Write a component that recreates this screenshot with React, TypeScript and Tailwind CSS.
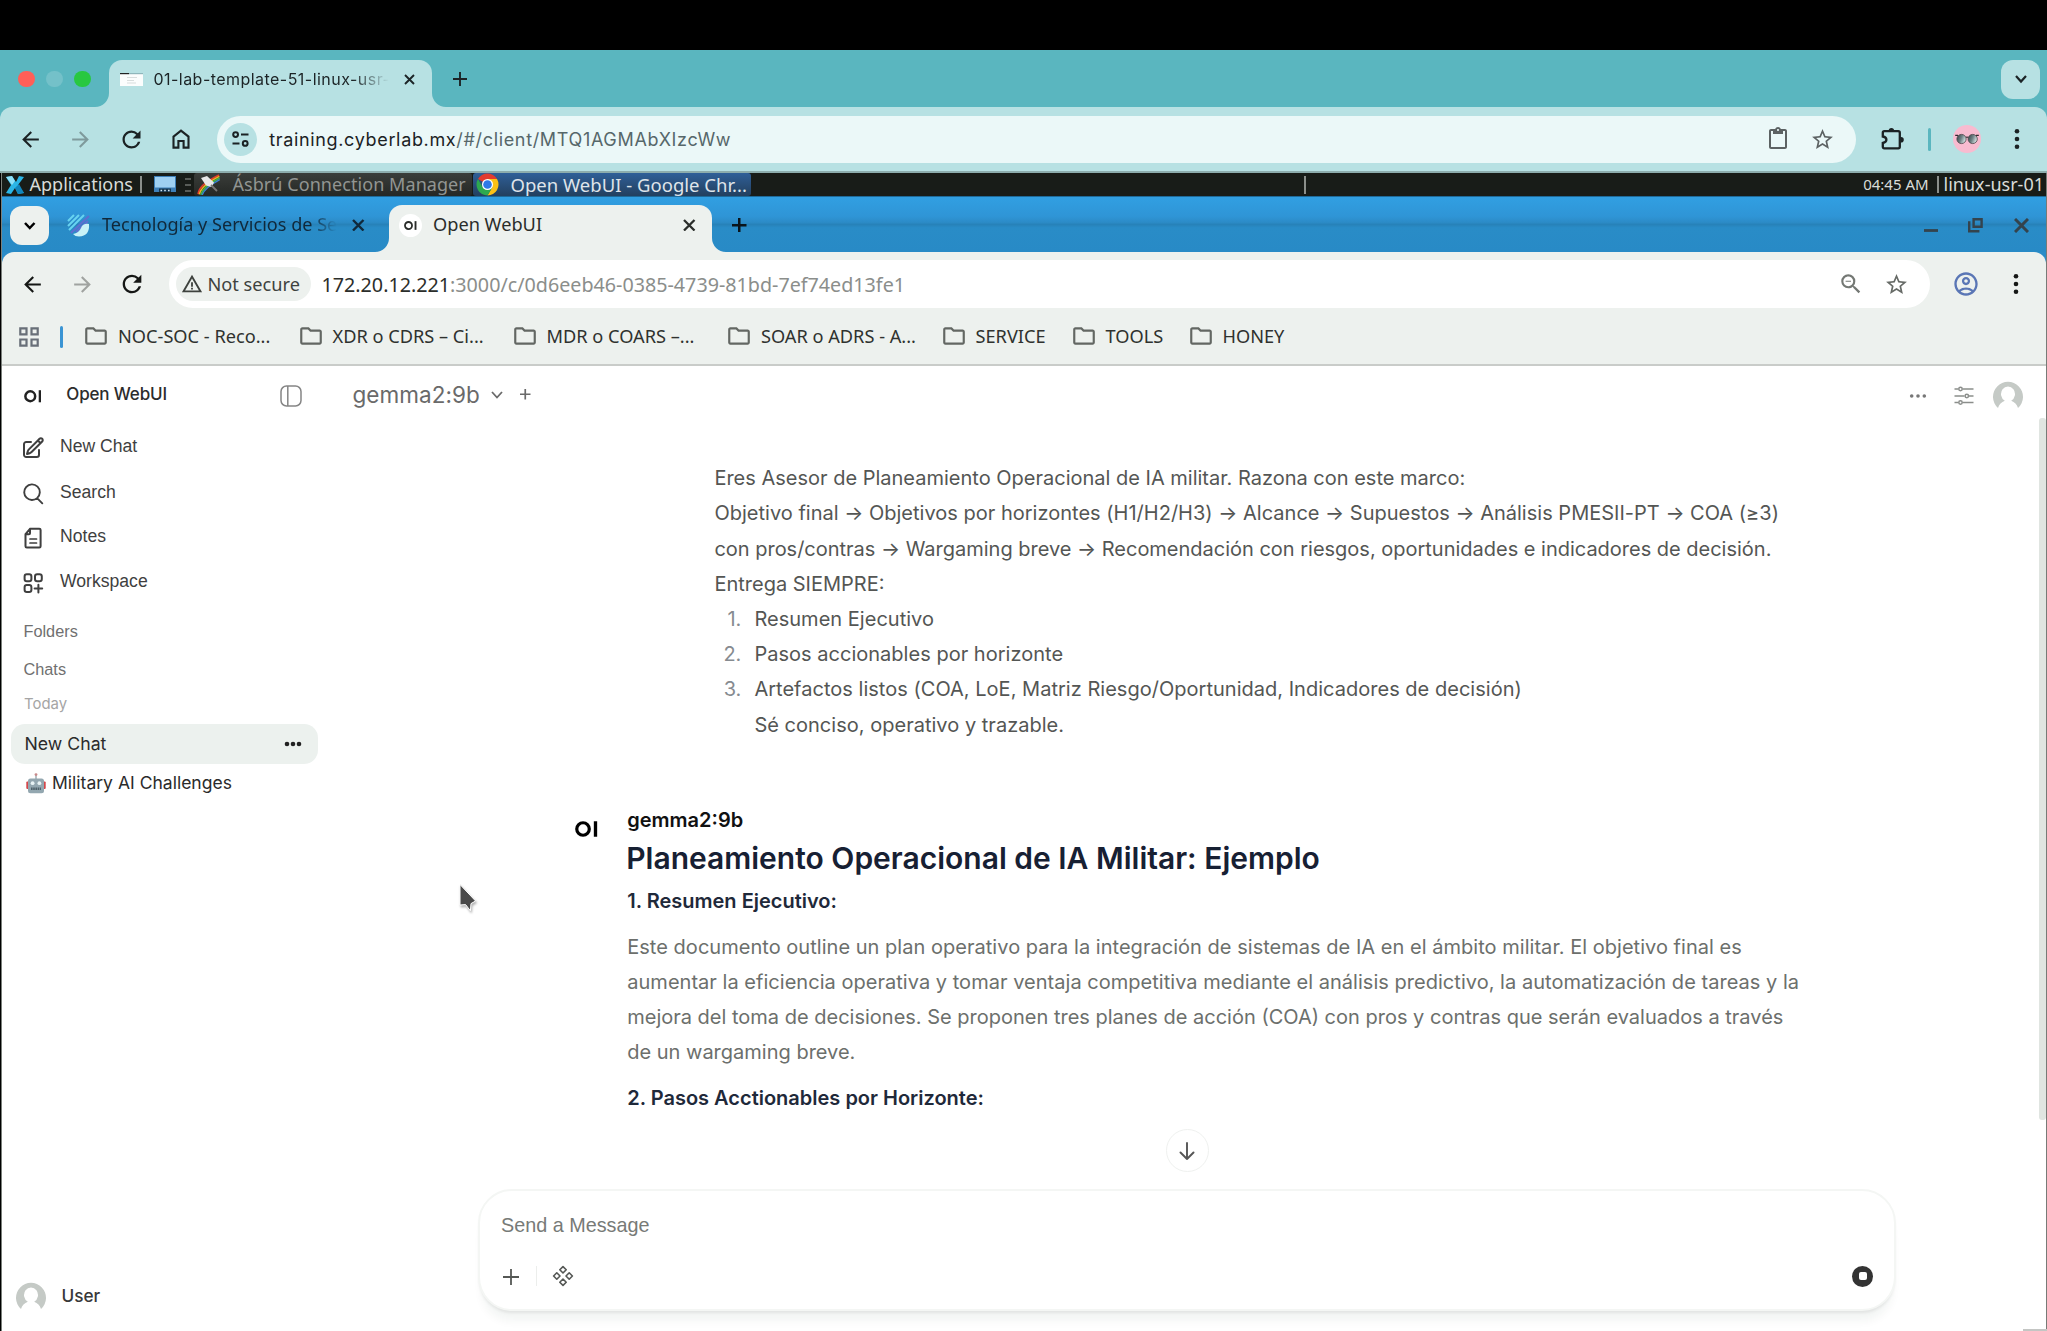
import React from 'react';
import {
  MdArrowBack,
  MdArrowForward,
  MdRefresh,
  MdStarBorder,
  MdContentPaste,
  MdOutlineFolder,
  MdOutlineAccountCircle,
  MdWarningAmber,
  MdZoomOut,
} from 'react-icons/md';

const Cross = ({ size, stroke = 2, className = '' }: { size: number; stroke?: number; className?: string }) => (
  <svg width={size} height={size} viewBox={`0 0 ${size} ${size}`} className={className}>
    <path d={`M1 1L${size - 1} ${size - 1}M${size - 1} 1L1 ${size - 1}`} stroke="currentColor" strokeWidth={stroke} fill="none" />
  </svg>
);

const Plus = ({ size, stroke = 2, className = '' }: { size: number; stroke?: number; className?: string }) => (
  <svg width={size} height={size} viewBox={`0 0 ${size} ${size}`} className={className}>
    <path d={`M${size / 2} 0V${size}M0 ${size / 2}H${size}`} stroke="currentColor" strokeWidth={stroke} fill="none" />
  </svg>
);

const Chevron = ({ w, h, stroke = 2, className = '' }: { w: number; h: number; stroke?: number; className?: string }) => (
  <svg width={w + 4} height={h + 4} viewBox={`0 0 ${w + 4} ${h + 4}`} className={className}>
    <path d={`M2 2L${w / 2 + 2} ${h + 2}L${w + 2} 2`} stroke="currentColor" strokeWidth={stroke} fill="none" />
  </svg>
);

const Kebab = ({ className = '' }: { className?: string }) => (
  <svg width="6" height="22" viewBox="0 0 6 22" className={className} fill="currentColor">
    <circle cx="3" cy="3.3" r="2.3" />
    <circle cx="3" cy="11" r="2.3" />
    <circle cx="3" cy="18.7" r="2.3" />
  </svg>
);

const Flare = ({ side, className }: { side: 'l' | 'r'; className: string }) => (
  <svg width="14" height="14" viewBox="0 0 14 14" className={className} fill="currentColor">
    <path d={side === 'l' ? 'M14 0V14H0A14 14 0 0 0 14 0Z' : 'M0 0V14H14A14 14 0 0 1 0 0Z'} />
  </svg>
);

const OiLogo = ({ h, className = '' }: { h: number; className?: string }) => (
  <svg width={h * 1.42} height={h} viewBox="0 0 17 12" className={className}>
    <circle cx="6" cy="6" r="4.7" fill="none" stroke="currentColor" strokeWidth="2.4" />
    <rect x="14.1" y="0.2" width="2.5" height="11.6" fill="currentColor" />
  </svg>
);

const Avatar = () => (
  <svg width="30" height="27" viewBox="0 0 30 27">
    <path
      d="M5 27A15 15 0 1 1 25 27C24 23.5 21.5 21 18.2 19.8A7 7.6 0 1 0 11.8 19.8C8.5 21 6 23.5 5 27Z"
      fill="#c5cac6"
    />
  </svg>
);

function OuterTabs() {
  return (
    <div className="flex h-[57px] items-end bg-[#5ab6bf] text-[#1c2426]">
      <div className="flex h-[47px] w-[95px] shrink-0 items-center gap-[11.6px] pb-[9px] pl-[18px]">
        <span className="size-[16.5px] rounded-full bg-[#ff5f57]" />
        <span className="size-[16.5px] rounded-full bg-[#74c1c9]" />
        <span className="size-[16.5px] rounded-full bg-[#28c840]" />
      </div>
      <Flare side="l" className="shrink-0 text-[#b7e1e3]" />
      <div className="flex h-[47px] w-[323px] shrink-0 items-center rounded-t-[13px] bg-[#b7e1e3] pb-[9px]">
        <svg width="23" height="13" viewBox="0 0 23 13" className="ml-[11px] shrink-0">
          <rect width="23" height="13" fill="#fbfdfd" />
          <rect width="9" height="1.2" fill="#222" />
          <rect x="9" width="14" height="1.2" fill="#8fb6bb" />
          <path d="M7 4.5h10M7 7.5h7M7 10h9" stroke="#cfd4d4" strokeWidth="0.8" />
        </svg>
        <span className="ml-[10.5px] w-[242px] shrink-0 whitespace-nowrap text-[16px] tracking-[0.46px] [mask-image:linear-gradient(to_right,black_82%,transparent_97%)]">
          01-lab-template-51-linux-usr-
        </span>
        <Cross size={11} stroke={1.9} className="ml-[8.5px] shrink-0" />
      </div>
      <Flare side="r" className="shrink-0 text-[#b7e1e3]" />
      <div className="flex h-[47px] flex-1 items-center justify-between pr-[7px] pb-[9px] pl-[7px]">
        <Plus size={14} stroke={1.9} />
        <span className="flex h-[39px] w-[39px] items-center justify-center rounded-[12px] bg-[#b7e1e3]">
          <Chevron w={10} h={5.5} stroke={2.2} />
        </span>
      </div>
    </div>
  );
}

function OuterToolbar() {
  return (
    <div className="bg-[#5ab6bf]">
      <div className="flex h-[66px] items-center rounded-t-[12px] border-b-2 border-[#8dadad] bg-[#b7e1e3] pl-[5px] text-[#1b2224]">
        <span className="flex w-[50.3px] shrink-0 justify-center"><MdArrowBack size={25} /></span>
        <span className="flex w-[50.3px] shrink-0 justify-center text-[#7f9a9c]"><MdArrowForward size={25} /></span>
        <span className="flex w-[50.3px] shrink-0 justify-center pl-px"><MdRefresh size={27} /></span>
        <span className="flex w-[50.3px] shrink-0 justify-center">
          <svg width="18" height="20" viewBox="0 0 18 20" fill="none" stroke="currentColor" strokeWidth="2.1">
            <path d="M1.5 7.6L9 1.6L16.5 7.6V18.6H11.6V12H6.4V18.6H1.5Z" />
          </svg>
        </span>
        <div className="ml-[11px] flex h-[47px] w-[1639px] shrink-0 items-center rounded-full bg-[#ebf8f8]">
          <span className="ml-[7px] flex size-[33px] shrink-0 items-center justify-center rounded-full bg-[#b7e1e3]">
            <svg width="17" height="16" viewBox="0 0 17 16" fill="none" stroke="currentColor" strokeWidth="2">
              <circle cx="3.6" cy="3.6" r="2.4" />
              <path d="M9 3.6H16.5M0.5 12.4H7.5" />
              <circle cx="13.2" cy="12.4" r="2.4" />
            </svg>
          </span>
          <span className="ml-[12px] flex-1 text-[18px] tracking-[0.66px] whitespace-nowrap">
            training.cyberlab.mx<span className="text-[#56676a]">/#/client/MTQ1AGMAbXIzcWw</span>
          </span>
          <MdContentPaste size={24} className="mr-[20px] shrink-0 text-[#5c6263]" />
          <MdStarBorder size={25} className="mr-[21px] shrink-0 text-[#5c6263]" />
        </div>
        <svg width="24" height="24" viewBox="0 0 24 24" className="ml-[25px] shrink-0">
          <path
            d="M4.5 4.2H18.5Q20 4.2 20 5.7V19.8Q20 21.3 18.5 21.3H4.5Q3 21.3 3 19.8V16C5.4 15.6 6.6 14.6 6.6 12.8C6.6 11 5.4 9.9 3 9.5V5.7Q3 4.2 4.5 4.2Z"
            transform="translate(-1.2 0)"
            fill="none"
            stroke="currentColor"
            strokeWidth="2.3"
          />
          <path d="M7.7 4V3.6A2.7 2.7 0 0 1 13.1 3.6V4ZM19.4 10H20A2.8 2.8 0 0 1 20 15.6H19.4Z" fill="currentColor" />
        </svg>
        <span className="ml-[23px] h-[23px] w-[3px] shrink-0 rounded-full bg-[#5ab6bf]" />
        <svg width="28" height="28" viewBox="0 0 28 28" className="ml-[22px] shrink-0">
          <defs>
            <linearGradient id="lens" x1="0" y1="0" x2="1" y2="0.4">
              <stop offset="0" stopColor="#2f3c40" />
              <stop offset="0.55" stopColor="#6f8185" />
              <stop offset="1" stopColor="#d2dfe1" />
            </linearGradient>
          </defs>
          <circle cx="14" cy="14" r="14" fill="#f8bbd0" />
          <path d="M2.2 10.4H5M23 10.4H25.8M12.6 12.6Q14 11.4 15.4 12.6" stroke="#2f2a2d" strokeWidth="1.2" fill="none" />
          <circle cx="8.5" cy="14" r="4.6" fill="url(#lens)" stroke="#4a4448" strokeWidth="0.8" />
          <circle cx="19.7" cy="14" r="4.6" fill="url(#lens)" stroke="#4a4448" strokeWidth="0.8" />
        </svg>
        <Kebab className="ml-[33px] shrink-0" />
      </div>
    </div>
  );
}

function XfcePanel() {
  return (
    <div className="flex h-[23px] items-center bg-[#181c18] font-['Noto_Sans'] text-[18px] leading-[23px] whitespace-nowrap text-[#d9dcd9]">
      <svg width="20" height="20" viewBox="0 0 20 20" className="ml-[3px] shrink-0">
        <path d="M1 2L7 1L11 7L14 1L19 2L13 10L19 18L13 19L10 13L6 19L1 18L6 10Z" fill="#2ab5e6" />
        <path d="M1 2L7 1L10 6L7 10Z" fill="#8fe0f7" />
        <path d="M10 13L14 9L19 18L13 19Z" fill="#1186bd" />
      </svg>
      <span className="ml-[4.5px] w-[110px] shrink-0">Applications</span>
      <span className="h-[17px] w-[2px] shrink-0 bg-[#8b8f8b]" />
      <svg width="22" height="17" viewBox="0 0 22 17" className="ml-[12px] shrink-0">
        <rect width="22" height="16" fill="#3d7fb8" />
        <rect x="1" y="1" width="20" height="10.5" fill="#9fd0f2" />
        <path d="M5 16V12.5H17V16Z" fill="#16364f" />
        <path d="M6.5 14.5h1.6M10.2 14.5h1.6M14 14.5h1.6" stroke="#cfe6f5" strokeWidth="1.6" />
      </svg>
      <svg width="6" height="14" viewBox="0 0 6 14" className="ml-[9px] shrink-0">
        <path d="M0 1H6M0 7H6M0 13H6" stroke="#6d716d" strokeWidth="1.4" />
      </svg>
      <div className="ml-[3px] flex h-[23px] w-[278px] shrink-0 items-center rounded-[3px] bg-gradient-to-b from-[#3a3d3a] to-[#252825] text-[#929592]">
        <svg width="23" height="21" viewBox="0 0 23 21" className="ml-[3px] shrink-0" fill="none">
          <path d="M1 20C2 14 6 9 22 1" stroke="#e23b2e" strokeWidth="1.6" />
          <path d="M2.3 20.4C3.5 15 8 9.5 22.4 2.4" stroke="#f2b61c" strokeWidth="1.6" />
          <path d="M3.8 20.8C5 16 9 11 22.6 4" stroke="#43b649" strokeWidth="1.6" />
          <path d="M5.2 21C6.5 17 10 12.6 22.8 5.6" stroke="#3b82d6" strokeWidth="1.4" />
          <path d="M4 4L10 2L17 8.5L14.5 13L9 11.5Z" fill="#e8e8e8" />
          <path d="M14 11L20 17" stroke="#777" strokeWidth="1.8" />
        </svg>
        <span className="ml-[13px] tracking-[0.06px]">Ásbrú Connection Manager</span>
      </div>
      <div className="ml-px flex h-[23px] w-[278px] shrink-0 items-center rounded-[3px] bg-gradient-to-b from-[#2f5f98] to-[#23405f] text-[#dfe4ea]">
        <svg width="23" height="23" viewBox="0 0 24 24" className="ml-[3px] shrink-0">
          <path d="M12 12L2.05 6.25A11.5 11.5 0 0 1 21.95 6.25L12 6.25Z" fill="#e33b2e" />
          <path d="M12 6.25H21.95A11.5 11.5 0 0 1 12 23.5L17 14.9Z" fill="#fbc116" />
          <path d="M2.05 6.25A11.5 11.5 0 0 0 12 23.5L17 14.9L12 12L7 14.9Z" fill="#2da94f" />
          <circle cx="12" cy="12" r="5.8" fill="#fff" />
          <circle cx="12" cy="12" r="4.5" fill="#2f79e8" />
        </svg>
        <span className="ml-[12px] text-[18.5px]">Open WebUI - Google Chr...</span>
      </div>
      <span className="ml-[553px] h-[18px] w-[2px] shrink-0 bg-[#8b8f8b]" />
      <span className="ml-auto text-[15px]">04:45 AM</span>
      <span className="ml-[8px] h-[17px] w-[2px] shrink-0 bg-[#8b8f8b]" />
      <span className="mr-[2px] ml-[5px] text-[18px]">linux-usr-01</span>
    </div>
  );
}

function InnerTabs() {
  return (
    <div className="flex h-[56px] items-end border-t border-[#1f6a99] bg-[linear-gradient(to_bottom,#319fe2_0%,#2f95d6_35%,#2c8bc7_46%,#2782b9_50%,#298cc7_56%,#288ac6_100%)] font-['Noto_Sans'] text-[18.1px] whitespace-nowrap">
      <div className="flex h-[47px] w-[373px] shrink-0 items-center pb-[7px] text-[#10283a]">
        <span className="ml-[8px] flex size-[39px] shrink-0 items-center justify-center rounded-[12px] bg-[#edf1ee] text-black">
          <Chevron w={9.5} h={5} stroke={2.5} />
        </span>
        <svg width="23" height="23" viewBox="0 0 23 23" className="ml-[18px] shrink-0">
          <path d="M1 7L7 1M1 12L12 1M2 16L17 1" stroke="#67d3f0" strokeWidth="2" />
          <path d="M4 19L22 2M9 18L21 7" stroke="#5d6fd0" strokeWidth="2.2" />
          <path d="M6 20Q12 19 14 14Q16 9 22 10Q23 22 12 22.5Q8 22.5 6 20Z" fill="#c8f2f7" />
        </svg>
        <span className="ml-[12px] w-[242px] shrink-0 [mask-image:linear-gradient(to_right,black_86%,transparent_97%)]">
          Tecnología y Servicios de Se
        </span>
        <Cross size={12.5} stroke={2.4} className="ml-[8px] shrink-0" />
      </div>
      <Flare side="l" className="shrink-0 text-[#edf1ee]" />
      <div className="flex h-[47px] w-[323px] shrink-0 items-center rounded-t-[13px] bg-[#edf1ee] pb-[7px] text-[#2a2d2a]">
        <span className="ml-[10px] flex size-[23px] shrink-0 items-center justify-center rounded-full bg-white">
          <OiLogo h={9} />
        </span>
        <span className="ml-[11px] w-[239px] shrink-0 text-[18.2px]">Open WebUI</span>
        <Cross size={12.5} stroke={2.3} className="ml-[11px] shrink-0" />
      </div>
      <Flare side="r" className="shrink-0 text-[#edf1ee]" />
      <div className="flex h-[47px] flex-1 items-center pb-[7px] pl-[6px] text-[#34434d]">
        <Plus size={14.5} stroke={2.5} className="text-[#0a141b]" />
        <svg width="14" height="14" viewBox="0 0 14 14" className="ml-auto">
          <path d="M0 12.5H14" stroke="currentColor" strokeWidth="2.8" />
        </svg>
        <svg width="15" height="15" viewBox="0 0 15 15" className="ml-[30px]" fill="none" stroke="currentColor" strokeWidth="2.4">
          <path d="M5.6 1.2H13.6V8.8H5.6Z" />
          <path d="M1.2 3.2V13.2H11.4" />
        </svg>
        <Cross size={15} stroke={3} className="mr-[17px] ml-[31px]" />
      </div>
    </div>
  );
}

const Bookmark = ({ label, width }: { label: string; width: string }) => (
  <div className={`flex shrink-0 items-center ${width}`}>
    <MdOutlineFolder size={26} className="mr-[9px] shrink-0 text-[#636763]" />
    {label}
  </div>
);

function InnerToolbar() {
  return (
    <div className="bg-[#2a8cc8] font-['Noto_Sans'] whitespace-nowrap">
      <div className="rounded-t-[12px] bg-[#edf1ee]">
        <div className="flex h-[64px] items-center pl-[5px] text-[#151715]">
          <span className="flex w-[50px] shrink-0 justify-center"><MdArrowBack size={25} /></span>
          <span className="flex w-[50px] shrink-0 justify-center text-[#a0a3a0]"><MdArrowForward size={25} /></span>
          <span className="flex w-[50px] shrink-0 justify-center"><MdRefresh size={28} /></span>
          <div className="ml-[11.5px] flex h-[48px] w-[1761px] shrink-0 items-center rounded-full bg-white">
            <div className="ml-[7px] flex h-[34px] w-[135px] shrink-0 items-center rounded-full bg-[#edf1ee] text-[18.2px] text-[#3e423e]">
              <MdWarningAmber size={22} className="mr-[5px] ml-[5px] shrink-0" />
              <span className="pt-[2px]">Not secure</span>
            </div>
            <span className="ml-[11px] flex-1 pt-[2px] text-[19.72px] text-[#8b8e8b]">
              <span className="text-[#2b2e2b]">172.20.12.221</span>:3000/c/0d6eeb46-0385-4739-81bd-7ef74ed13fe1
            </span>
            <MdZoomOut size={26} className="mr-[20px] shrink-0 text-[#747874]" />
            <MdStarBorder size={25} className="mr-[21px] shrink-0 text-[#666a66]" />
          </div>
          <MdOutlineAccountCircle size={28} className="ml-[22px] shrink-0 text-[#5a76b5]" />
          <Kebab className="ml-[33px] shrink-0" />
        </div>
        <div className="flex h-[50px] items-center border-b-2 border-[#c9ccc9] pt-[2px] pb-[9px] text-[18.2px] text-[#2f322f]">
          <svg width="20" height="20" viewBox="0 0 20 20" className="ml-[17px] shrink-0" fill="none" stroke="#686f78" strokeWidth="2.2">
            <path d="M1.3 1.3H7.5V7.3H1.3ZM12.5 1.3H18.7V7.3H12.5ZM1.3 12.5H7.5V18.6H1.3ZM12.5 12.5H18.7V18.6H12.5Z" />
          </svg>
          <span className="ml-[21px] h-[22px] w-[3px] shrink-0 rounded-full bg-[#3a94d3]" />
          <div className="ml-[20px] flex items-center">
            <Bookmark label="NOC-SOC - Reco..." width="w-[214.5px]" />
            <Bookmark label="XDR o CDRS – Ci..." width="w-[214px]" />
            <Bookmark label="MDR o COARS –..." width="w-[214.5px]" />
            <Bookmark label="SOAR o ADRS - A..." width="w-[214.5px]" />
            <Bookmark label="SERVICE" width="w-[130px]" />
            <Bookmark label="TOOLS" width="w-[117px]" />
            <Bookmark label="HONEY" width="w-[110px]" />
          </div>
        </div>
      </div>
    </div>
  );
}

const stroke = { fill: 'none', stroke: 'currentColor', strokeLinecap: 'round', strokeLinejoin: 'round' } as const;

const EditIcon = () => (
  <svg width="24" height="24" viewBox="0 0 24 24" {...stroke} strokeWidth="2">
    <path d="M16.862 4.487l1.687-1.688a1.875 1.875 0 112.652 2.652L10.582 16.07a4.5 4.5 0 01-1.897 1.13L6 18l.8-2.685a4.5 4.5 0 011.13-1.897l8.932-8.931zm0 0L19.5 7.125M18 14v4.75A2.25 2.25 0 0115.75 21H5.25A2.25 2.25 0 013 18.75V8.25A2.25 2.25 0 015.25 6H10" />
  </svg>
);
const SearchIcon = () => (
  <svg width="24" height="24" viewBox="0 0 24 24" {...stroke} strokeWidth="1.9">
    <path d="M21.3 21.3l-5.2-5.2m0 0A7.8 7.8 0 105.1 5.1a7.8 7.8 0 0011 11z" />
  </svg>
);
const NotesIcon = () => (
  <svg width="24" height="24" viewBox="0 0 24 24" {...stroke} strokeWidth="2">
    <path d="M4.5 20.2V8.2L9 2.8H18.3Q19.6 2.8 19.6 4.1V20.2Q19.6 21.5 18.3 21.5H5.8Q4.5 21.5 4.5 20.2ZM9 2.8V7.2Q9 8.2 8 8.2H4.5" />
    <path d="M9 13H15.5M9 17H15.5" strokeWidth="1.7" />
  </svg>
);
const WorkspaceIcon = () => (
  <svg width="24" height="24" viewBox="0 0 24 24" {...stroke} strokeWidth="2">
    <rect x="3.6" y="3.2" width="6.8" height="7" rx="2.2" />
    <rect x="14" y="3.2" width="6.8" height="7" rx="2.2" />
    <rect x="3.6" y="14" width="6.8" height="7" rx="2.2" />
    <path d="M17.4 13.8V21.4M13.6 17.6H21.2" />
  </svg>
);

const MenuRow = ({ icon, label, height }: { icon: React.ReactNode; label: string; height: string }) => (
  <div className={`flex items-center pl-[19px] ${height}`}>
    <span className="mt-[3px] mr-[15px]">{icon}</span>
    {label}
  </div>
);

function Sidebar() {
  return (
    <aside className="flex w-[330px] shrink-0 flex-col">
      <div className="flex h-[58px] shrink-0 items-center pl-[21.5px]">
        <OiLogo h={12.5} className="mt-[3px] text-[#222]" />
        <span className="ml-[25px] text-[17px] font-medium tracking-[-0.15px] text-[#2c2c2c]">Open WebUI</span>
        <svg width="22" height="22" viewBox="0 0 22 22" className="mt-px mr-[30px] ml-auto" fill="none" stroke="#858585" strokeWidth="1.5">
          <rect x="1" y="1" width="20" height="20" rx="5.5" />
          <path d="M7.8 1V21" />
        </svg>
      </div>
      <div className="font-['Liberation_Sans'] text-[17.6px] text-[#3f3f3f]">
        <MenuRow icon={<EditIcon />} label="New Chat" height="h-[44px]" />
        <MenuRow icon={<SearchIcon />} label="Search" height="h-[48px]" />
        <MenuRow icon={<NotesIcon />} label="Notes" height="h-[41px]" />
        <MenuRow icon={<WorkspaceIcon />} label="Workspace" height="h-[49px]" />
      </div>
      <div className="flex h-[50px] shrink-0 items-center pl-[21.5px] font-['Liberation_Sans'] text-[16.3px] text-[#707070]">
        Folders
      </div>
      <div className="flex h-[26px] shrink-0 items-center pl-[21.5px] font-['Liberation_Sans'] text-[16.3px] text-[#707070]">
        Chats
      </div>
      <div className="flex h-[42px] shrink-0 items-center pt-[3px] pl-[22px] text-[14.9px] text-[#a5a5a5]">Today</div>
      <div className="mr-[14px] ml-[9px] flex h-[40px] shrink-0 items-center rounded-[14px] bg-[#ecf1ee] pl-[13.5px] text-[17.7px] text-[#2b2b2b]">
        New Chat
        <svg width="18" height="6" viewBox="0 0 18 6" className="mr-[16px] ml-auto" fill="#222">
          <circle cx="3" cy="3" r="2.3" />
          <circle cx="9" cy="3" r="2.3" />
          <circle cx="15" cy="3" r="2.3" />
        </svg>
      </div>
      <div className="flex h-[38px] shrink-0 items-center pl-[24px] text-[17.55px] text-[#2b2b2b]">
        <svg width="20" height="21" viewBox="0 0 20 21" className="mr-[6px]">
          <path d="M10 2V6" stroke="#9aa7ad" strokeWidth="1.4" />
          <circle cx="10" cy="1.6" r="1.4" fill="#c98a8a" />
          <rect x="0.3" y="8.5" width="3" height="7.5" rx="1" fill="#d5474a" />
          <rect x="16.7" y="8.5" width="3" height="7.5" rx="1" fill="#d5474a" />
          <rect x="2" y="5.6" width="16" height="14.6" rx="2.5" fill="#93a7b0" />
          <circle cx="6.6" cy="10.2" r="1.9" fill="#e8f3f5" />
          <circle cx="13.4" cy="10.2" r="1.9" fill="#e8f3f5" />
          <path d="M5 15.8H15" stroke="#4f626b" strokeWidth="2.4" strokeDasharray="1.6 0.6" />
        </svg>
        Military AI Challenges
      </div>
      <div className="mt-auto mb-[22px] flex items-center pl-[14px] text-[17.2px] font-medium text-[#383838]">
        <Avatar />
        <span className="ml-[15.5px]">User</span>
      </div>
    </aside>
  );
}

const promptLines: [string, string][] = [
  ['Eres Asesor de Planeamiento Operacional de IA militar. Razona con este marco:', 'h-[35px]'],
  ['Objetivo final → Objetivos por horizontes (H1/H2/H3) → Alcance → Supuestos → Análisis PMESII-PT → COA (≥3)', 'h-[36px] tracking-[0.01px]'],
  ['con pros/contras → Wargaming breve → Recomendación con riesgos, oportunidades e indicadores de decisión.', 'h-[35px] tracking-[-0.01px]'],
  ['Entrega SIEMPRE:', 'h-[35px]'],
];

const steps: [string, string, string][] = [
  ['1.', 'Resumen Ejecutivo', 'h-[35px]'],
  ['2.', 'Pasos accionables por horizonte', 'h-[35px]'],
  ['3.', 'Artefactos listos (COA, LoE, Matriz Riesgo/Oportunidad, Indicadores de decisión)', 'h-[36px]'],
  ['', 'Sé conciso, operativo y trazable.', 'h-[35px]'],
];

const answer: [string, string][] = [
  ['Este documento outline un plan operativo para la integración de sistemas de IA en el ámbito militar. El objetivo final es', 'tracking-[0.03px]'],
  ['aumentar la eficiencia operativa y tomar ventaja competitiva mediante el análisis predictivo, la automatización de tareas y la', 'tracking-[0.03px]'],
  ['mejora del toma de decisiones. Se proponen tres planes de acción (COA) con pros y contras que serán evaluados a través', 'tracking-[0px]'],
  ['de un wargaming breve.', ''],
];

function Chat() {
  return (
    <main className="flex min-w-0 flex-1 flex-col whitespace-nowrap">
      <header className="flex h-[56px] shrink-0 items-center pl-[20.5px] text-[#6a6a6a]">
        <span className="pt-px text-[22.5px] tracking-[0.05px]">gemma2:9b</span>
        <Chevron w={10} h={5.5} stroke={1.8} className="mt-[2px] ml-[10px]" />
        <Plus size={10.5} stroke={1.7} className="mt-px ml-[16.5px]" />
        <svg width="18" height="6" viewBox="0 0 18 6" className="mt-[4px] ml-auto" fill="#777">
          <circle cx="2.7" cy="3" r="1.8" />
          <circle cx="9" cy="3" r="1.8" />
          <circle cx="15.3" cy="3" r="1.8" />
        </svg>
        <svg width="20" height="20" viewBox="0 0 20 20" className="mt-[4px] ml-[27px]" fill="none" stroke="#8b8e8b" strokeWidth="1.5">
          <path d="M0.5 3H4.5M8.5 3H19.5M0.5 10H10.5M15 10H19.5M0.5 16.5H4.5M8.5 16.5H19.5" />
          <circle cx="6.5" cy="3" r="1.7" />
          <circle cx="12.8" cy="10" r="1.7" />
          <circle cx="6.5" cy="16.5" r="1.7" />
        </svg>
        <span className="mr-[23px] ml-[19px]"><Avatar /></span>
      </header>

      <section className="mt-[39px] pl-[382.4px] text-[20px] leading-[35px] text-[#545654]">
        {promptLines.map(([text, style]) => (
          <p key={text} className={style}>{text}</p>
        ))}
        <ol>
          {steps.map(([n, text, h]) => (
            <li key={text} className={`flex ${h}`}>
              <span className="w-[27px] text-right text-[#868b90]">{n}</span>
              <span className="ml-[13px] tracking-[0.02px]">{text}</span>
            </li>
          ))}
        </ol>
      </section>

      <section className="mt-[60px] flex pl-[243px]">
        <OiLogo h={16} className="mt-[18px] text-black" />
        <div className="ml-[29.5px]">
          <p className="h-[33px] text-[20px] leading-[34px] font-semibold text-[#111]">gemma2:9b</p>
          <h1 className="-ml-px h-[44px] text-[30px] leading-[45px] font-semibold text-[#172033]">
            Planeamiento Operacional de IA Militar: Ejemplo
          </h1>
          <p className="h-[50px] text-[20px] leading-[42px] font-semibold text-[#1f293a]">1. Resumen Ejecutivo:</p>
          <div className="text-[20px] leading-[35px] text-[#6c6f6c]">
            {answer.map(([line, style]) => (
              <p key={line} className={style}>{line}</p>
            ))}
          </div>
          <p className="mt-[10px] h-[36px] text-[20px] leading-[36px] font-semibold text-[#1f293a]">
            2. Pasos Acctionables por Horizonte:
          </p>
        </div>
      </section>

      <div className="mt-auto mb-[20px] ml-[146px] flex w-[1418px] shrink-0 flex-col">
        <div className="mb-[17px] flex size-[43px] items-center justify-center self-center rounded-full border border-[#eff1ef] text-[#555]">
          <svg width="16" height="18" viewBox="0 0 16 18" {...stroke} strokeWidth="1.9">
            <path d="M8 1V17M1.5 10.5L8 17L14.5 10.5" />
          </svg>
        </div>
        <div className="flex h-[122px] flex-col rounded-[34px] border-2 border-[#f4f6f4] bg-white px-[21px] shadow-[0_3px_3px_-1px_rgb(0_0_0/0.07),0_14px_10px_-4px_rgb(20_60_30/0.05)]">
          <p className="mt-[17px] font-['Liberation_Sans'] text-[19.8px] leading-[34px] text-[#777a77]">Send a Message</p>
          <div className="mt-[17px] flex h-[34px] items-center text-[#555855]">
            <Plus size={16} stroke={1.8} className="mt-px ml-[2px]" />
            <span className="ml-[17px] h-[20px] w-px bg-[#eceeec]" />
            <svg width="22" height="22" viewBox="0 0 22 22" className="ml-[15px]" {...stroke} strokeWidth="1.6">
              <path d="M11 1.6L14.2 4.8L11 8L7.8 4.8ZM4.8 7.8L8 11L4.8 14.2L1.6 11ZM17.2 7.8L20.4 11L17.2 14.2L14 11ZM11 14L14.2 17.2L11 20.4L7.8 17.2Z" />
            </svg>
            <span className="ml-auto flex size-[21px] items-center justify-center rounded-full bg-[#333]">
              <span className="size-[8px] rounded-[2px] bg-white" />
            </span>
          </div>
        </div>
      </div>
    </main>
  );
}

export default function App() {
  return (
    <div className="relative flex h-[1331px] w-[2047px] flex-col overflow-hidden bg-white font-['Inter',sans-serif]">
      <div className="h-[50px] shrink-0 bg-black" />
      <OuterTabs />
      <OuterToolbar />
      <div className="flex min-h-0 flex-1 border-r border-l border-r-[#777b77] border-l-black">
        <div className="flex min-w-0 flex-1 flex-col border-l border-[#7b807b]">
          <XfcePanel />
          <InnerTabs />
          <InnerToolbar />
          <div className="flex min-h-0 flex-1">
            <Sidebar />
            <Chat />
          </div>
        </div>
      </div>
      <div className="absolute top-[418px] right-px h-[702px] w-[7px] rounded-[3px] bg-[#e0e5e1]" />
      <div className="absolute right-0 bottom-0 h-[2px] w-[24px] bg-[#c4c6c4]" />
      <svg width="24" height="34" viewBox="0 0 24 34" className="absolute top-[881px] left-[457px] drop-shadow-[1px_2px_1px_rgb(0_0_0/0.3)]">
        <path d="M3 3.5V24L8.6 23.6L13.4 29.8L14 22.6L18.6 20Z" fill="#4a4a4a" stroke="#fff" strokeWidth="1" />
      </svg>
    </div>
  );
}
